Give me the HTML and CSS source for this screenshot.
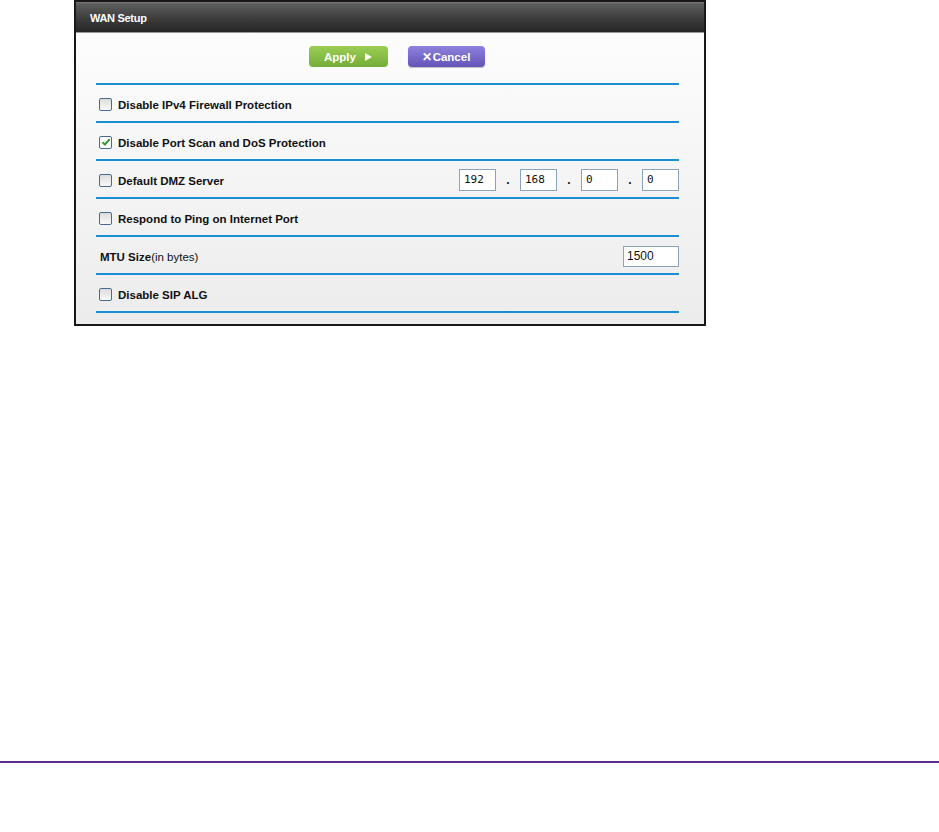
FILE: index.html
```html
<!DOCTYPE html>
<html lang="en">
<head>
    <meta charset="UTF-8">
    <title>WAN Setup</title>
    <link rel="stylesheet" href="styles.css">
</head>
<body>
    <div class="frame">
        <div class="header">WAN Setup</div>
        <div class="content">
            <div class="actions">
                <button class="btn btn-apply">Apply <span class="arrow"></span></button>
                <button class="btn btn-cancel"><span class="x">&#x2715;</span>Cancel</button>
            </div>
            <div class="rows">
                <div class="row">
                    <span class="check"></span>
                    <span class="label">Disable IPv4 Firewall Protection</span>
                </div>
                <div class="row">
                    <span class="check checked">
                        <svg width="10" height="10" viewBox="0 0 10 10"><path d="M1.5 5.2 L4 7.6 L8.6 2.2" fill="none" stroke="#2e9a2a" stroke-width="2"/></svg>
                    </span>
                    <span class="label">Disable Port Scan and DoS Protection</span>
                </div>
                <div class="row">
                    <span class="check"></span>
                    <span class="label">Default DMZ Server</span>
                    <div class="ip">
                        <span class="field mono">192</span><span class="dot">.</span>
                        <span class="field mono">168</span><span class="dot">.</span>
                        <span class="field mono">0</span><span class="dot">.</span>
                        <span class="field mono">0</span>
                    </div>
                </div>
                <div class="row">
                    <span class="check"></span>
                    <span class="label">Respond to Ping on Internet Port</span>
                </div>
                <div class="row">
                    <span class="label plain">MTU Size<span class="note">(in bytes)</span></span>
                    <span class="field mtu">1500</span>
                </div>
                <div class="row">
                    <span class="check"></span>
                    <span class="label">Disable SIP ALG</span>
                </div>
            </div>
        </div>
    </div>
    <div class="rule"></div>
</body>
</html>
```
FILE: styles.css
```css
* {
    margin: 0;
    padding: 0;
    box-sizing: border-box;
}
body {
    font-family: "Liberation Sans", Arial, sans-serif;
    background: #fff;
    color: #111;
    height: 832px;
}
/* Panel */
.frame {
    margin-left: 74px;
    width: 632px;
    height: 326px;
    border: 2px solid #1b1717;
    display: flex;
    flex-direction: column;
}
.header {
    height: 31px;
    background: linear-gradient(#7a7a7a 0, #5c5c5c 2px, #3a3a3a 60%, #262626);
    border-bottom: 1px solid #9a9a9a;
    color: #fff;
    font-weight: bold;
    font-size: 11px;
    letter-spacing: -0.3px;
    padding: 10px 0 0 14px;
}
.content {
    flex: 1;
    background: linear-gradient(#fdfdfd, #ececec);
    padding: 0 25px 0 20px;
}
/* Buttons */
.actions {
    display: flex;
    justify-content: center;
    gap: 20px;
    padding: 13px 0 16px 18px;
    height: 50px;
}
.btn {
    height: 21px;
    border: none;
    border-radius: 4px;
    color: #fff;
    font-family: inherit;
    font-weight: bold;
    font-size: 11.5px;
    display: flex;
    align-items: center;
    justify-content: center;
}
.btn-apply {
    width: 79px;
    background: linear-gradient(#9ccd55, #74ad38);
    gap: 9px;
}
.btn-cancel {
    width: 77px;
    background: linear-gradient(#8d82dc, #6553b8);
    box-shadow: 0 1px 1px rgba(0,0,0,0.25);
}
.arrow {
    width: 0;
    height: 0;
    border-left: 7px solid #fff;
    border-top: 4px solid transparent;
    border-bottom: 4px solid transparent;
}
.x {
    font-size: 12px;
    margin-right: 1px;
}
/* Rows */
.rows {
    border-top: 2px solid #1a8fcf;
}
.row {
    height: 38px;
    border-bottom: 2px solid #1a8fcf;
    display: flex;
    align-items: center;
    padding: 4px 0 0 3px;
}
.check {
    width: 13px;
    height: 13px;
    border: 1px solid #4a6a94;
    border-radius: 2px;
    background: linear-gradient(#dcdcdc, #fafafa);
    margin-right: 6px;
    margin-top: -2px;
    display: flex;
    align-items: center;
    justify-content: center;
}
.check.checked {
    background: #fff;
}
.label {
    font-weight: bold;
    font-size: 11.5px;
}
.label.plain {
    padding-left: 1px;
}
.note {
    font-weight: normal;
}
.ip {
    margin-left: auto;
    margin-top: -3px;
    display: flex;
    align-items: center;
}
.field {
    height: 22px;
    border: 1px solid #8aa4bd;
    background: #fff;
    font-size: 12px;
    display: flex;
    align-items: center;
    padding-left: 4px;
}
.ip .field {
    width: 37px;
}
.mono {
    font-family: "DejaVu Sans Mono", monospace;
    font-size: 11px;
}
.dot {
    width: 24px;
    text-align: center;
    font-weight: bold;
    font-size: 12px;
}
.mtu {
    margin-left: auto;
    width: 56px;
    height: 21px;
    margin-top: -2px;
    padding-left: 3px;
}
/* Page rule */
.rule {
    margin-top: 435px;
    height: 2px;
    background: #5e2b8f;
}
```
